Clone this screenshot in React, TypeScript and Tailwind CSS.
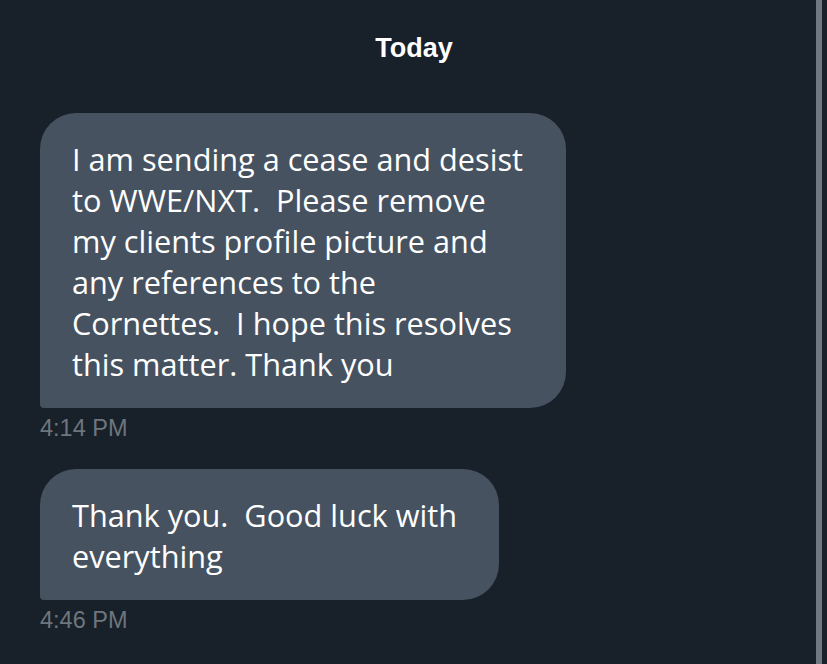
const MESSAGES = [
  {
    lines: [
      'I am sending a cease and desist',
      'to WWE/NXT.  Please remove',
      'my clients profile picture and',
      'any references to the',
      'Cornettes.  I hope this resolves',
      'this matter. Thank you',
    ],
    time: '4:14 PM',
    width: 'w-[526px]',
  },
  {
    lines: ['Thank you.  Good luck with', 'everything'],
    time: '4:46 PM',
    width: 'w-[459px]',
  },
];

export default function App() {
  return (
    <div className="flex h-[664px] w-[827px] overflow-hidden bg-[#18202a]">
      <div className="flex flex-1 flex-col">
        <div className="pl-[12px] pt-[33px] text-center font-['Liberation_Sans',Arial,sans-serif] text-[27px] leading-[30px] font-bold text-white">
          Today
        </div>
        <div className="mt-[50px] flex flex-col gap-[27px] pl-[40px]">
          {MESSAGES.map((m) => (
            <div key={m.time} className="flex flex-col">
              <div
                className={`${m.width} rounded-[36px] rounded-bl-[4px] bg-[#46525f] pt-[26px] pb-[23px] pl-[32px] font-['Open_Sans','Noto_Sans',sans-serif] text-[30.7px] leading-[41px] text-white whitespace-pre`}
              >
                {m.lines.map((l) => (
                  <div key={l}>{l}</div>
                ))}
              </div>
              <div className="mt-[6px] font-['Liberation_Sans',Arial,sans-serif] text-[23.5px] leading-[28px] text-[#6e767d]">
                {m.time}
              </div>
            </div>
          ))}
        </div>
      </div>
      <div className="w-[6px] bg-[#6f7880]" />
      <div className="w-[5px]" />
    </div>
  );
}
